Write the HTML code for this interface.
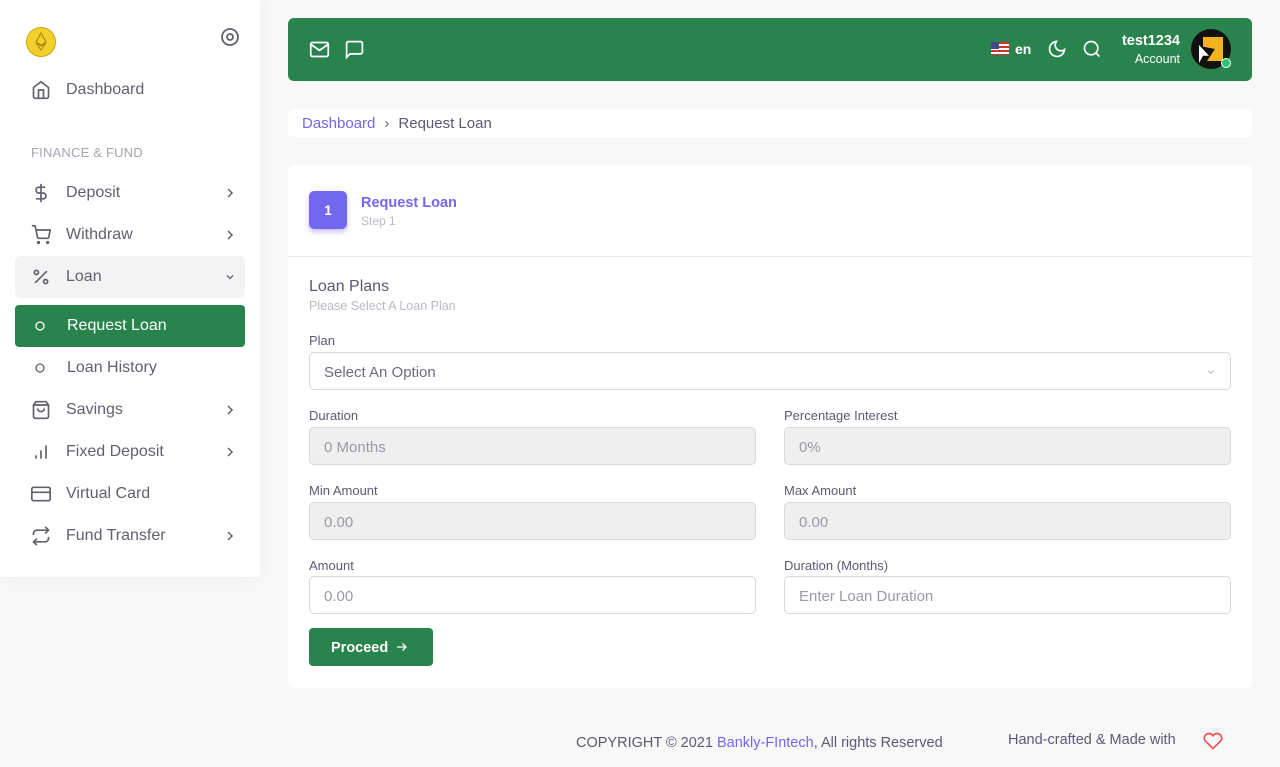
<!DOCTYPE html>
<html><head><meta charset="utf-8"><style>
*{box-sizing:border-box;margin:0;padding:0}
body{width:1280px;height:767px;background:#f8f8f8;font-family:"Liberation Sans",sans-serif;color:#5e5873;position:relative;overflow:hidden}
.side{position:absolute;left:0;top:0;width:260px;height:577px;background:#fff;box-shadow:0 0 15px rgba(0,0,0,.05)}
.item{position:absolute;left:15px;width:230px;height:42px;display:flex;align-items:center;font-size:16px;color:#625f6e}
.item svg{position:absolute;left:16px}
.item span{position:absolute;left:51px;top:12px}
.item svg.ch{left:auto;right:9px}
.top{position:absolute;left:288px;top:18px;width:964px;height:63px;background:#28844c;border-radius:6px}
.bc{position:absolute;left:288px;top:109px;width:964px;height:28px;background:#fff;border-radius:6px;font-size:15px;padding:6px 14px}
.card{position:absolute;left:288px;top:165px;width:964px;height:523px;background:#fff;border-radius:6px}
.lbl{position:absolute;font-size:13px;color:#5e5873}
.inp{position:absolute;height:38px;border:1px solid #d8d6de;border-radius:5px;font-size:15px;color:#9b99a3;padding:11px 14px}
.dis{background:#efefef}
</style></head><body>
<div class="side">
 <div style="position:absolute;left:26px;top:27px;width:30px;height:30px;border-radius:50%;background:#f3cf2c;border:1.5px solid #c9a515"></div>
 <svg style="position:absolute;left:34px;top:32px" width="14" height="20" viewBox="0 0 14 20"><path d="M7 1L2 10l5 3 5-3zM2 11l5 7 5-7-5 3z" fill="none" stroke="#a88710" stroke-width="1"/></svg>
 <svg style="position:absolute;left:220px;top:27px" width="20" height="20" viewBox="0 0 20 20"><circle cx="10" cy="10" r="8" fill="none" stroke="#625f6e" stroke-width="1.8"/><circle cx="10" cy="10" r="3" fill="none" stroke="#625f6e" stroke-width="1.8"/></svg>
 <div class="item" style="top:69px"><svg width="20" height="20" viewBox="0 0 24 24" fill="none" stroke="#625f6e" stroke-width="2"><path d="M3 9l9-7 9 7v11a2 2 0 0 1-2 2H5a2 2 0 0 1-2-2z"/><path d="M9 22V12h6v10"/></svg><span>Dashboard</span></div>
 <div style="position:absolute;left:31px;top:145px;font-size:13px;color:#a6a4b0;letter-spacing:.2px">FINANCE &amp; FUND</div>
 <div class="item" style="top:172px"><svg width="20" height="20" viewBox="0 0 24 24" fill="none" stroke="#625f6e" stroke-width="2"><path d="M12 1v22M17 5H9.5a3.5 3.5 0 0 0 0 7h5a3.5 3.5 0 0 1 0 7H6"/></svg><span>Deposit</span><svg class="ch" width="12" height="12" viewBox="0 0 12 12"><path d="M4 2l4 4-4 4" fill="none" stroke="#625f6e" stroke-width="1.5"/></svg></div>
 <div class="item" style="top:214px"><svg width="20" height="20" viewBox="0 0 24 24" fill="none" stroke="#625f6e" stroke-width="2"><circle cx="9" cy="21" r="1"/><circle cx="20" cy="21" r="1"/><path d="M1 1h4l2.7 13.4a2 2 0 0 0 2 1.6h9.7a2 2 0 0 0 2-1.6L23 6H6"/></svg><span>Withdraw</span><svg class="ch" width="12" height="12" viewBox="0 0 12 12"><path d="M4 2l4 4-4 4" fill="none" stroke="#625f6e" stroke-width="1.5"/></svg></div>
 <div class="item" style="top:256px;background:#f3f3f3;border-radius:6px"><svg width="20" height="20" viewBox="0 0 24 24" fill="none" stroke="#625f6e" stroke-width="2"><path d="M19 5L5 19"/><circle cx="6.5" cy="6.5" r="2.5"/><circle cx="17.5" cy="17.5" r="2.5"/></svg><span>Loan</span><svg class="ch" width="12" height="12" viewBox="0 0 12 12"><path d="M3 4.5l3 3 3-3" fill="none" stroke="#625f6e" stroke-width="1.3"/></svg></div>
 <div class="item" style="top:305px;background:#28844c;color:#fff;border-radius:4px"><svg width="12" height="12" style="left:19px" viewBox="0 0 12 12"><circle cx="6" cy="6" r="4" fill="none" stroke="#fff" stroke-width="1.3"/></svg><span style="left:52px">Request Loan</span></div>
 <div class="item" style="top:347px"><svg width="12" height="12" style="left:19px" viewBox="0 0 12 12"><circle cx="6" cy="6" r="4" fill="none" stroke="#625f6e" stroke-width="1.3"/></svg><span style="left:52px">Loan History</span></div>
 <div class="item" style="top:389px"><svg width="20" height="20" viewBox="0 0 24 24" fill="none" stroke="#625f6e" stroke-width="2"><path d="M6 2L3 6v14a2 2 0 0 0 2 2h14a2 2 0 0 0 2-2V6l-3-4z"/><path d="M3 6h18M16 10a4 4 0 0 1-8 0"/></svg><span>Savings</span><svg class="ch" width="12" height="12" viewBox="0 0 12 12"><path d="M4 2l4 4-4 4" fill="none" stroke="#625f6e" stroke-width="1.5"/></svg></div>
 <div class="item" style="top:431px"><svg width="20" height="20" viewBox="0 0 24 24" fill="none" stroke="#625f6e" stroke-width="2"><path d="M12 20V10M18 20V4M6 20v-4"/></svg><span>Fixed Deposit</span><svg class="ch" width="12" height="12" viewBox="0 0 12 12"><path d="M4 2l4 4-4 4" fill="none" stroke="#625f6e" stroke-width="1.5"/></svg></div>
 <div class="item" style="top:473px"><svg width="20" height="20" viewBox="0 0 24 24" fill="none" stroke="#625f6e" stroke-width="2"><rect x="1" y="4" width="22" height="16" rx="2"/><path d="M1 10h22"/></svg><span>Virtual Card</span></div>
 <div class="item" style="top:515px"><svg width="20" height="20" viewBox="0 0 24 24" fill="none" stroke="#625f6e" stroke-width="2"><path d="M17 1l4 4-4 4"/><path d="M3 11V9a4 4 0 0 1 4-4h14M7 23l-4-4 4-4"/><path d="M21 13v2a4 4 0 0 1-4 4H3"/></svg><span>Fund Transfer</span><svg class="ch" width="12" height="12" viewBox="0 0 12 12"><path d="M4 2l4 4-4 4" fill="none" stroke="#625f6e" stroke-width="1.5"/></svg></div>
</div>
<div class="top">
 <svg style="position:absolute;left:21px;top:21px" width="21" height="21" viewBox="0 0 24 24" fill="none" stroke="#fff" stroke-width="2"><path d="M4 4h16c1.1 0 2 .9 2 2v12c0 1.1-.9 2-2 2H4c-1.1 0-2-.9-2-2V6c0-1.1.9-2 2-2z"/><path d="M22 6l-10 7L2 6"/></svg>
 <svg style="position:absolute;left:56px;top:21px" width="21" height="21" viewBox="0 0 24 24" fill="none" stroke="#fff" stroke-width="2"><path d="M21 15a2 2 0 0 1-2 2H7l-4 4V5a2 2 0 0 1 2-2h14a2 2 0 0 1 2 2z"/></svg>
 <div style="position:absolute;left:703px;top:24px;width:18px;height:13px;background:repeating-linear-gradient(#c33 0 2px,#fff 2px 4px)"><div style="width:8px;height:7px;background:#3c4a8a"></div></div>
 <div style="position:absolute;left:727px;top:23px;color:#fff;font-weight:bold;font-size:14px">en</div>
 <svg style="position:absolute;left:759px;top:21px" width="20" height="20" viewBox="0 0 24 24" fill="none" stroke="#fff" stroke-width="2"><path d="M21 12.8A9 9 0 1 1 11.2 3 7 7 0 0 0 21 12.8z"/></svg>
 <svg style="position:absolute;left:794px;top:21px" width="20" height="20" viewBox="0 0 24 24" fill="none" stroke="#fff" stroke-width="2"><circle cx="11" cy="11" r="8"/><path d="M21 21l-4.3-4.3"/></svg>
 <div style="position:absolute;right:72px;top:15px;color:#fff;font-weight:bold;font-size:14.5px;text-align:right">test1234</div>
 <div style="position:absolute;right:72px;top:34px;color:#fff;font-size:12.5px">Account</div>
 <div style="position:absolute;left:903px;top:11px;width:40px;height:40px;border-radius:50%;background:#111;overflow:hidden"><div style="position:absolute;left:12px;top:8px;width:20px;height:24px;background:#f4b31a;clip-path:polygon(0 0,100% 0,100% 100%,20% 100%,60% 50%,0 40%)"></div><div style="position:absolute;left:8px;top:16px;width:10px;height:18px;background:#fff;clip-path:polygon(0 0,100% 60%,40% 60%,0 100%)"></div></div>
 <div style="position:absolute;left:933px;top:40px;width:10px;height:10px;border-radius:50%;background:#28c76f;border:1.5px solid #fff"></div>
</div>
<div class="bc"><span style="color:#7367f0">Dashboard</span><span style="color:#6e6b7b;margin:0 9px">›</span><span style="color:#5e5873">Request Loan</span></div>
<div class="card">
 <div style="position:absolute;left:21px;top:26px;width:38px;height:38px;border-radius:5px;background:#7367f0;color:#fff;font-weight:bold;font-size:14px;text-align:center;line-height:38px;box-shadow:0 3px 6px rgba(115,103,240,.4)">1</div>
 <div style="position:absolute;left:73px;top:30px;color:#7367f0;font-weight:bold;font-size:14.5px">Request Loan</div>
 <div style="position:absolute;left:73px;top:49px;color:#b9b9c3;font-size:12px">Step 1</div>
 <div style="position:absolute;left:0;top:91px;width:964px;height:1px;background:#ebe9f1"></div>
 <div style="position:absolute;left:21px;top:113px;font-size:16px;color:#5e5873">Loan Plans</div>
 <div style="position:absolute;left:21px;top:134px;font-size:12.5px;color:#b9b9c3">Please Select A Loan Plan</div>
 <div class="lbl" style="left:21px;top:168px">Plan</div>
 <div class="inp" style="left:21px;top:187px;width:922px;color:#6e6b7b">Select An Option<svg style="position:absolute;right:14px;top:14px" width="10" height="10" viewBox="0 0 12 12"><path d="M3 4.5l3 3 3-3" fill="none" stroke="#b9b9c3" stroke-width="1.3"/></svg></div>
 <div class="lbl" style="left:21px;top:243px">Duration</div>
 <div class="inp dis" style="left:21px;top:262px;width:447px">0 Months</div>
 <div class="lbl" style="left:496px;top:243px">Percentage Interest</div>
 <div class="inp dis" style="left:496px;top:262px;width:447px">0%</div>
 <div class="lbl" style="left:21px;top:318px">Min Amount</div>
 <div class="inp dis" style="left:21px;top:337px;width:447px">0.00</div>
 <div class="lbl" style="left:496px;top:318px">Max Amount</div>
 <div class="inp dis" style="left:496px;top:337px;width:447px">0.00</div>
 <div class="lbl" style="left:21px;top:393px">Amount</div>
 <div class="inp" style="left:21px;top:411px;width:447px">0.00</div>
 <div class="lbl" style="left:496px;top:393px">Duration (Months)</div>
 <div class="inp" style="left:496px;top:411px;width:447px">Enter Loan Duration</div>
 <div style="position:absolute;left:21px;top:463px;width:124px;height:38px;background:#28844c;border-radius:4px;color:#fff;font-weight:bold;font-size:14.5px;line-height:40px;padding-left:22px">Proceed <svg style="margin-left:4px;vertical-align:-1px" width="12" height="12" viewBox="0 0 12 12"><path d="M1 6h9M6.5 2.5L10 6l-3.5 3.5" fill="none" stroke="#fff" stroke-width="1.3"/></svg></div>
</div>
<div style="position:absolute;left:576px;top:735px;font-size:14.5px;color:#5e5873">COPYRIGHT © 2021 <span style="color:#7367f0">Bankly-FIntech</span>, All rights Reserved</div>
<div style="position:absolute;left:1008px;top:732px;font-size:14.5px;color:#5e5873">Hand-crafted &amp; Made with</div>
<svg style="position:absolute;left:1202px;top:731px" width="22" height="20" viewBox="0 0 24 24" fill="none" stroke="#ea5455" stroke-width="2"><path d="M20.8 4.6a5.5 5.5 0 0 0-7.8 0L12 5.7l-1-1.1a5.5 5.5 0 0 0-7.8 7.8l1 1L12 21l7.8-7.6 1-1a5.5 5.5 0 0 0 0-7.8z"/></svg>
</body></html>
